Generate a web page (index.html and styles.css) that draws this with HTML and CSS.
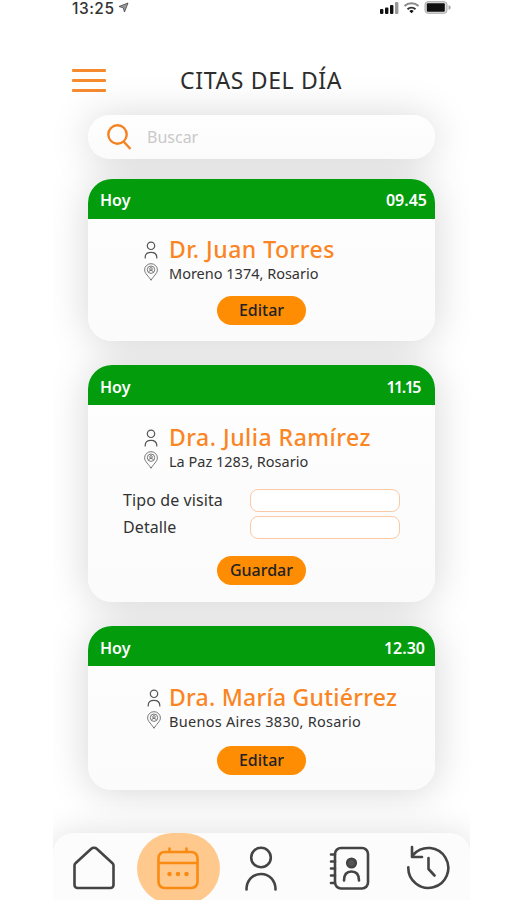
FILE: index.html
```html
<!DOCTYPE html>
<html lang="es">
<head>
<meta charset="utf-8">
<title>Citas del día</title>
<link rel="stylesheet" href="styles.css">
</head>
<body>
<svg width="0" height="0" class="defs" aria-hidden="true">
  <symbol id="person" viewBox="0 0 14 18"><circle cx="7" cy="4.800" r="3.700"/><path d="M1.200 17.500v-1.200c0-3 2.300-5 5.800-5s5.800 2 5.800 5v1.200"/></symbol>
  <symbol id="pin" viewBox="0 0 14 18"><path d="M7 17.300C5 13.500.6 10.500.6 6.900a6.400 6.200 0 0 1 12.800 0c0 3.600-4.400 6.600-6.400 10.400z"/><circle cx="7" cy="6.700" r="3.700"/><circle cx="7" cy="5.900" r="1.300"/><path d="M4.700 9c.5-2 4.100-2 4.600 0"/></symbol>
</svg>
<div class="phone">
  <div class="status">
    <span class="time">13:25</span>
    <svg class="loc" width="11" height="11" viewBox="0 0 11 11"><path d="M10 1 6.500 10 5.200 5.800 1 4.500z" fill="#999" stroke="#444" stroke-width=".8"/></svg>
    <svg class="signals" width="72" height="14" viewBox="0 0 72 14">
      <g fill="#111"><rect x="0" y="9" width="3.400" height="5" rx="1"/><rect x="5" y="7.500" width="3.400" height="6.500" rx="1"/><rect x="10" y="5" width="3.400" height="9" rx="1"/></g>
      <rect x="15" y="2" width="3.400" height="12" rx="1" fill="#999"/>
      <g fill="none"><path d="M24.500 6a10.300 10.300 0 0 1 14 0" stroke="#888" stroke-width="2"/><path d="M27.500 9.200a6 6 0 0 1 8 0" stroke="#333" stroke-width="2"/></g>
      <path d="M31.500 13.200 29.300 11a3.200 3.200 0 0 1 4.400 0z" fill="#111"/>
      <rect x="45" y="1.700" width="22" height="11.600" rx="3" fill="#ddd" stroke="#aaa"/>
      <rect x="46.800" y="3.300" width="18" height="8.500" rx="1" fill="#111"/>
      <path d="M68.500 5.300c3 .5 3 4 0 4.500z" fill="#aaa"/>
    </svg>
  </div>
  <header class="top">
    <div class="burger"><i></i><i></i><i></i></div>
    <h1>CITAS DEL DÍA</h1>
  </header>
  <main class="list">
    <div class="search raised">
      <svg width="25" height="26" viewBox="0 0 25 26"><circle cx="10.500" cy="10.500" r="9.200"/><path d="M16.500 17.500 23.500 25"/></svg>
      <span>Buscar</span>
    </div>
    <article class="card raised c1">
      <div class="bar"><b class="day">Hoy</b><b class="hour">09.45</b></div>
      <div class="body">
        <div class="who"><svg class="ic"><use href="#person"/></svg><h2>Dr. Juan Torres</h2></div>
        <div class="where"><svg class="ic pin"><use href="#pin"/></svg><p>Moreno 1374, Rosario</p></div>
        <button class="btn edit">Editar</button>
      </div>
    </article>
    <article class="card raised c2">
      <div class="bar"><b class="day">Hoy</b><b class="hour">11.15</b></div>
      <div class="body">
        <div class="who"><svg class="ic"><use href="#person"/></svg><h2>Dra. Julia Ramírez</h2></div>
        <div class="where"><svg class="ic pin"><use href="#pin"/></svg><p>La Paz 1283, Rosario</p></div>
        <div class="form">
          <label for="tipo">Tipo de visita</label><input id="tipo">
          <label for="detalle">Detalle</label><input id="detalle">
        </div>
        <button class="btn save">Guardar</button>
      </div>
    </article>
    <article class="card raised c3">
      <div class="bar"><b class="day">Hoy</b><b class="hour">12.30</b></div>
      <div class="body">
        <div class="who"><svg class="ic"><use href="#person"/></svg><h2>Dra. María Gutiérrez</h2></div>
        <div class="where"><svg class="ic pin"><use href="#pin"/></svg><p>Buenos Aires 3830, Rosario</p></div>
        <button class="btn edit">Editar</button>
      </div>
    </article>
  </main>
  <nav class="tabs">
    <a class="home"><svg width="46" height="46" viewBox="0 0 46 46"><path d="M3.500 20.500a3 3 0 0 1 1-2.300L20 4a4.500 4.500 0 0 1 6 0l15.500 14.200a3 3 0 0 1 1 2.300V40a3 3 0 0 1-3 3h-33a3 3 0 0 1-3-3z"/></svg></a>
    <a class="on"><svg width="46" height="46" viewBox="0 0 46 46"><rect x="3.500" y="6" width="39" height="36" rx="6"/><path d="M4 17h38M14.500 2.500v3.500M31.500 2.500v3.500"/><path class="dots" d="M14.500 28h.01M23 28h.01M31.500 28h.01"/></svg></a>
    <a><svg width="46" height="46" viewBox="0 0 46 46"><circle cx="23" cy="12.500" r="9.800"/><path d="M8.500 44.500c0-9 6-15.500 14.500-15.500s14.500 6.500 14.500 15.500"/></svg></a>
    <a class="book"><svg width="46" height="46" viewBox="0 0 46 46"><rect x="9" y="3" width="33" height="40.500" rx="6"/><path d="M5 9.500h4M5 16.500h4M5 23.500h4M5 30.500h4M5 38h4"/><circle cx="25.500" cy="18" r="4.300" class="dot"/><path d="M18 35.500c0-6 3-9 7.500-9s7.500 3 7.500 9"/></svg></a>
    <a><svg width="46" height="46" viewBox="0 0 46 46"><path d="M3.300 22.300A20 20 0 1 0 8.500 9.500M7 2v10h10M23.500 13v11l6 6.500"/></svg></a>
  </nav>
</div>
</body>
</html>
```

FILE: styles.css
```css
* { box-sizing: border-box; }
body { margin: 0; background: #fff; font-family: "Noto Sans", sans-serif; color: #333; }
h1, h2, p { margin: 0; font-weight: 400; white-space: nowrap; }
.defs { display: block; }
.phone { width: 417px; height: 900px; margin-left: 53px; overflow: hidden; display: flex; flex-direction: column; }

.status { height: 18px; display: flex; padding: 0 19px; flex: none; }
.time { font: 500 15.500px/18px Inter, sans-serif; letter-spacing: .5px; color: #333; }
.loc { margin: 2px 0 0 4px; }
.signals { margin-left: auto; margin-right: -1px; }

.top { height: 97px; flex: none; display: flex; padding: 50px 0 0 19px; }
.burger { width: 34px; padding-top: 1px; display: flex; flex-direction: column; gap: 7px; }
.burger i { height: 3px; background: #f58a2e; border-radius: 1px; }
h1 { margin-left: 74px; margin-top: -4px; font-size: 23px; line-height: 32px; letter-spacing: .65px; color: #2d2d2d; }

.list { position: relative; z-index: 0; flex: none; height: 718px; padding: 0 35px; display: flex; flex-direction: column; }
.raised { position: relative; background: linear-gradient(#fefefe, #fbfbfb); flex: none; }
.raised::before { content: ""; position: absolute; z-index: -1; inset: 0; border-radius: 24px; box-shadow: 0 2px 40px rgba(0, 0, 0, .17); }

.search { height: 44px; border-radius: 22px; display: flex; align-items: center; padding-left: 19px; }
.search svg { fill: none; stroke: #f58220; stroke-width: 2.400; }
.search span { margin-left: 15px; font-size: 16px; line-height: 22px; color: #c9c9c9; }

.card { border-radius: 24px; }
.c1 { margin-top: 20px; height: 162px; }
.c2 { margin-top: 24px; height: 237px; }
.c3 { margin-top: 24px; height: 164px; }
.bar { height: 40px; border-radius: 24px 24px 0 0; background: #029c0d; color: #fff; display: flex; justify-content: space-between; align-items: center; padding: 2px 8px 0 12px; font-size: 16px; }
.bar b { font-weight: 600; }
.c2 .bar { padding-top: 4px; padding-right: 15px; }
.c2 .hour { letter-spacing: -1.500px; }
.c3 .bar { padding-top: 4px; padding-right: 10px; }

.body { padding: 16px 0 0 56px; }
.c2 .body { padding-top: 18px; }
.c3 .body { padding-top: 17px; }
.who, .where { display: flex; align-items: center; }
.ic { width: 14px; height: 18px; fill: none; stroke: #555; stroke-width: 1.200; margin-right: 11px; }
.pin { stroke-width: .8; position: relative; top: -1px; }
.c3 .ic { margin-left: 3px; margin-right: 8px; }
h2 { font-size: 23px; font-weight: 500; line-height: 29px; height: 29px; letter-spacing: .5px; color: #fa8522; }
.c3 h2 { letter-spacing: .25px; }
.where { height: 18px; }
.where p { font-size: 14.500px; line-height: 16px; margin-top: -1px; }
.c3 .where p { letter-spacing: .28px; }
.btn { display: block; width: 89px; height: 29px; margin: 14px 0 0 73px; padding: 0; border: 0; border-radius: 15px; background: #ff8d03; color: #222; font: 500 16px/29px "Noto Sans", sans-serif; }
.form { margin: 19px 0 0 -21px; display: grid; grid-template-columns: 127px 150px; row-gap: 4px; align-items: center; }
.form label { font-size: 16px; line-height: 23px; letter-spacing: .1px; }
.form input { width: 150px; height: 23px; border: 1px solid #fbc9a4; border-radius: 8px; background: #fff; }
.c2 .btn { margin-top: 17px; }
.c3 .btn { margin-top: 16px; }

.tabs { position: relative; z-index: 1; flex: 1; border-radius: 20px 20px 0 0; background: #fcfcfc; box-shadow: 0 0 32px rgba(0, 0, 0, .13); display: flex; }
.tabs a { width: 83.500px; height: 69px; flex: none; display: flex; align-items: center; justify-content: center; }
.tabs a.home { padding-right: 2px; }
.tabs a.book { padding-left: 9px; }
.tabs a.on { width: 83px; height: 71px; border-radius: 42px; background: #ffc98e; }
.tabs svg { flex: none; fill: none; stroke: #444; stroke-width: 2.600; stroke-linecap: round; stroke-linejoin: round; }
.tabs .on svg { stroke: #f98b12; }
.tabs .dots { stroke-width: 4.500; }
.tabs .dot { fill: #555; stroke: #444; }
```
